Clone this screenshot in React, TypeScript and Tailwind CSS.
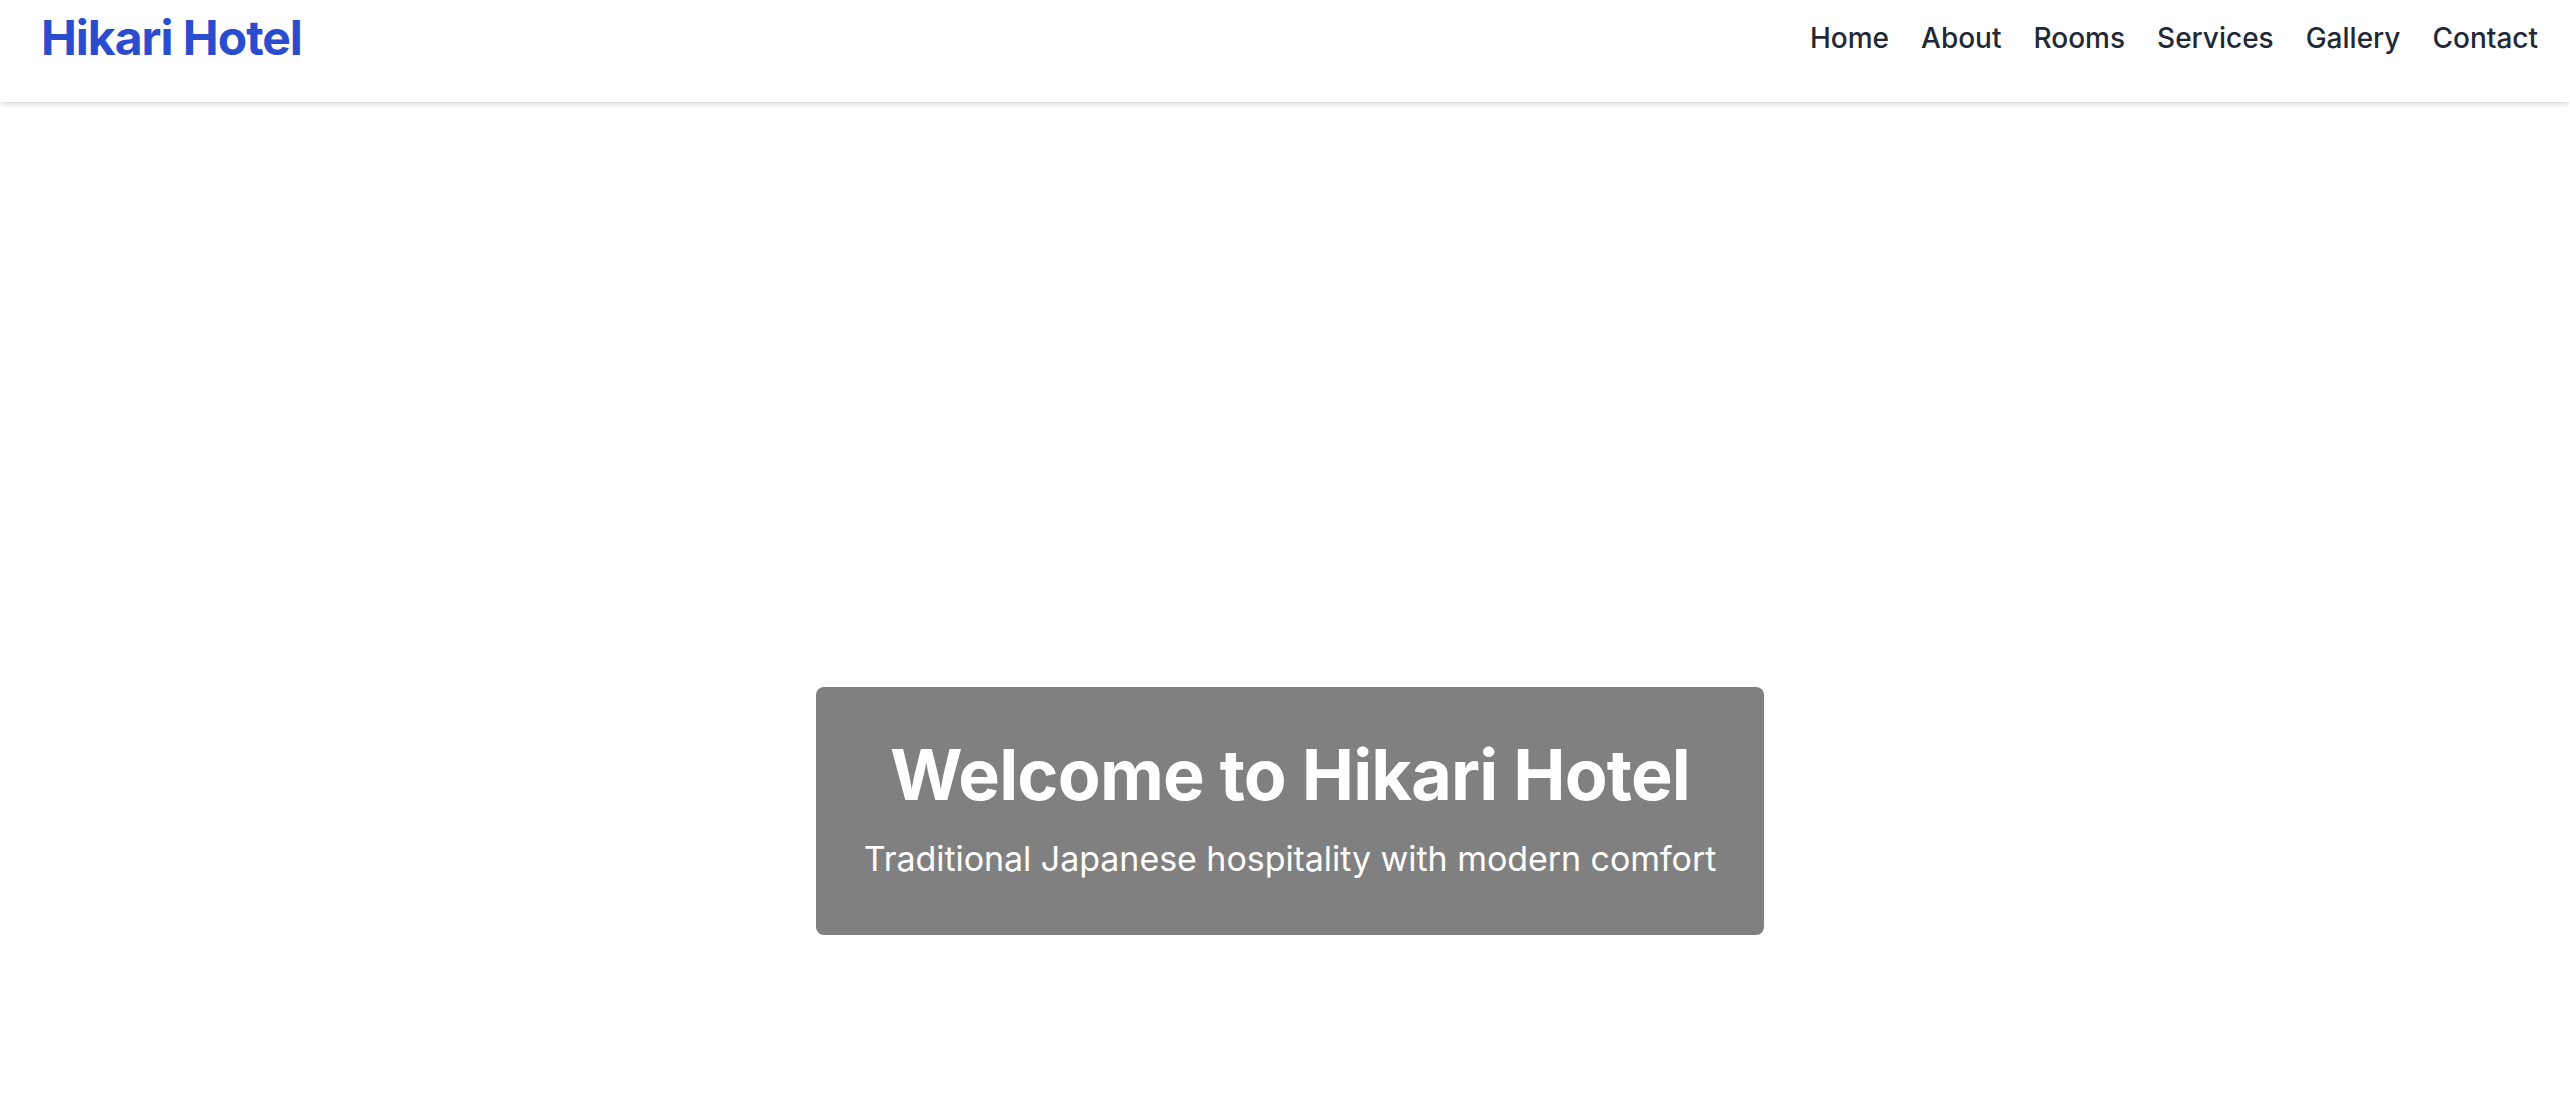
import React from 'react';

const navItems = ['Home', 'About', 'Rooms', 'Services', 'Gallery', 'Contact'];

const Header: React.FC = () => (
  <header className="h-[102px] bg-white shadow-md pl-[41px] pr-[32px] relative z-10">
    <div className="h-[76px] flex items-center justify-between">
      <div className="text-[48px] font-bold text-[#2a4dd0] leading-none tracking-[-1px]">Hikari Hotel</div>
      <nav className="flex items-center gap-[32px]">
        {navItems.map(item => (
          <a key={item} href="#" className="text-[28px] font-medium text-[#1f2937] leading-none">
            {item}
          </a>
        ))}
      </nav>
    </div>
  </header>
);

const Hero: React.FC = () => (
  <section className="flex justify-center pt-[585px] pb-[120px] pl-[10px]">
    <div className="bg-[#808080] rounded-[8px] px-[48px] py-[48px] text-center text-white">
      <h1 className="text-[70px] font-bold leading-[80px] tracking-[-0.8px] mb-[16px]">Welcome to Hikari Hotel</h1>
      <p className="text-[34px] leading-[56px] tracking-[-0.05px]">Traditional Japanese hospitality with modern comfort</p>
    </div>
  </section>
);

export default function App() {
  return (
    <div className="min-h-screen bg-white" style={{ fontFamily: 'Inter, "Noto Sans", sans-serif' }}>
      <Header />
      <Hero />
    </div>
  );
}
